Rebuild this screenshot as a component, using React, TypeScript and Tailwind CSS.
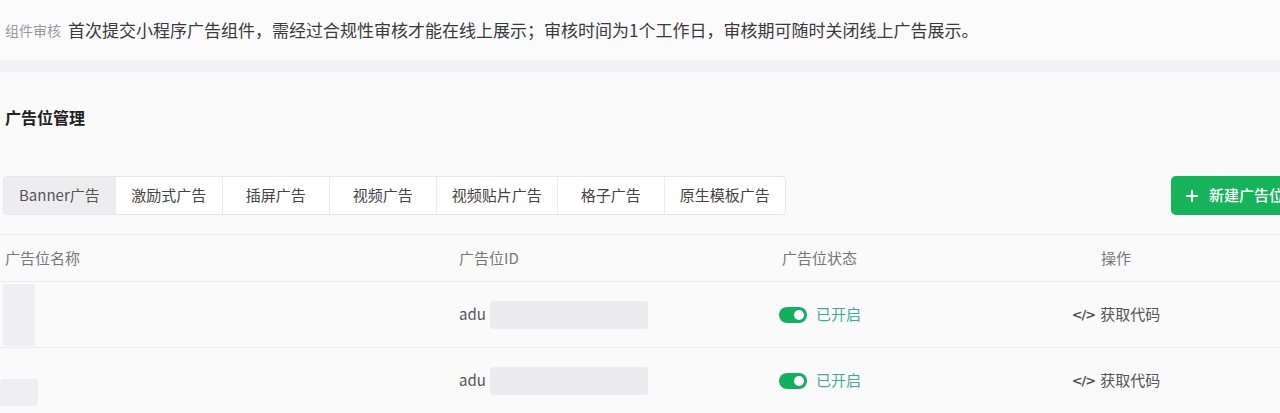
import { Plus } from "lucide-react";

const tabs = ["Banner广告", "激励式广告", "插屏广告", "视频广告", "视频贴片广告", "格子广告", "原生模板广告"];

const rows = [
  { nameBlob: "ml-[3px] w-[32px] h-[62px] mt-[2px]", idBlob: "h-[28px]" },
  { nameBlob: "ml-0 w-[38px] h-[27px] mt-[31px]", idBlob: "h-[28px]" },
];

function Toggle() {
  return (
    <span className="relative inline-flex h-[16px] w-[28px] items-center rounded-full bg-[#12b05e]">
      <span className="absolute right-[3px] h-[10px] w-[10px] rounded-full bg-white" />
    </span>
  );
}

export default function App() {
  return (
    <div className="h-[413px] w-[1280px] overflow-hidden bg-[#f9f9fb] font-['Noto_Sans_CJK_SC',sans-serif] text-[#333]">
      <div className="w-[1320px]">
        {/* notice bar */}
        <div className="flex h-[60px] items-center bg-[#fbfbfc] pl-[5px]">
          <span className="text-[14px] text-[#9a9a9e]">组件审核</span>
          <span className="ml-[7px] text-[17px] text-[#3a3a3c]">
            首次提交小程序广告组件，需经过合规性审核才能在线上展示；审核时间为1个工作日，审核期可随时关闭线上广告展示。
          </span>
        </div>
        <div className="h-[12px] bg-[#f2f2f4]" />

        <div className="bg-[#fafafb]">
          <h2 className="pl-[5px] pt-[33px] text-[16px] font-bold leading-[24px] text-[#222]">广告位管理</h2>

          <div className="mt-[47px] flex items-center pr-[4px]">
            <div className="ml-[3px] flex h-[39px] overflow-hidden rounded-[4px] border border-[#e6e6e9] bg-white">
              {tabs.map((t, i) => (
                <div
                  key={t}
                  className={`flex min-w-[107px] items-center justify-center px-[15px] text-[15px] ${
                    i === 0 ? "bg-[#ededf0] text-[#555]" : "border-l border-[#ececef] text-[#444]"
                  }`}
                >
                  {t}
                </div>
              ))}
            </div>
            <button
              type="button"
              className="ml-auto flex h-[39px] w-[145px] items-center gap-[8px] rounded-[5px] bg-[#16b35a] pl-[12px] text-[15px] font-medium text-white"
            >
              <Plus className="h-[18px] w-[18px]" strokeWidth={2.5} />
              新建广告位
            </button>
          </div>

          <div className="mt-[19px] border-t border-[#ececef]">
            <div className="grid h-[46px] grid-cols-[459px_320px_241px_192px] items-center text-[15px] text-[#777]">
              <span className="pl-[5px]">广告位名称</span>
              <span>广告位ID</span>
              <span className="pl-[3px]">广告位状态</span>
              <span className="text-center">操作</span>
            </div>
            {rows.map((r, i) => (
              <div
                key={i}
                className="grid h-[66px] grid-cols-[459px_320px_241px_192px] items-center border-t border-[#ececef] text-[15px]"
              >
                <div className="h-full">
                  <div className={`${r.nameBlob} rounded-[2px] bg-[#efeff2]`} />
                </div>
                <div className="flex items-center">
                  <span className="text-[#555]">adu</span>
                  <span className={`ml-[4px] w-[158px] ${r.idBlob} rounded-[3px] bg-[#ececef]`} />
                </div>
                <div className="flex items-center gap-[9px]">
                  <Toggle />
                  <span className="text-[#43ad93]">已开启</span>
                </div>
                <div className="flex items-center justify-center gap-[5px] text-[#555]">
                  <span className="font-['DejaVu_Sans',sans-serif] text-[13px] font-bold tracking-[-1px]">&lt;/&gt;</span>
                  <span>获取代码</span>
                </div>
              </div>
            ))}
            <div className="border-t border-[#ececef]" />
          </div>
        </div>
      </div>
    </div>
  );
}
